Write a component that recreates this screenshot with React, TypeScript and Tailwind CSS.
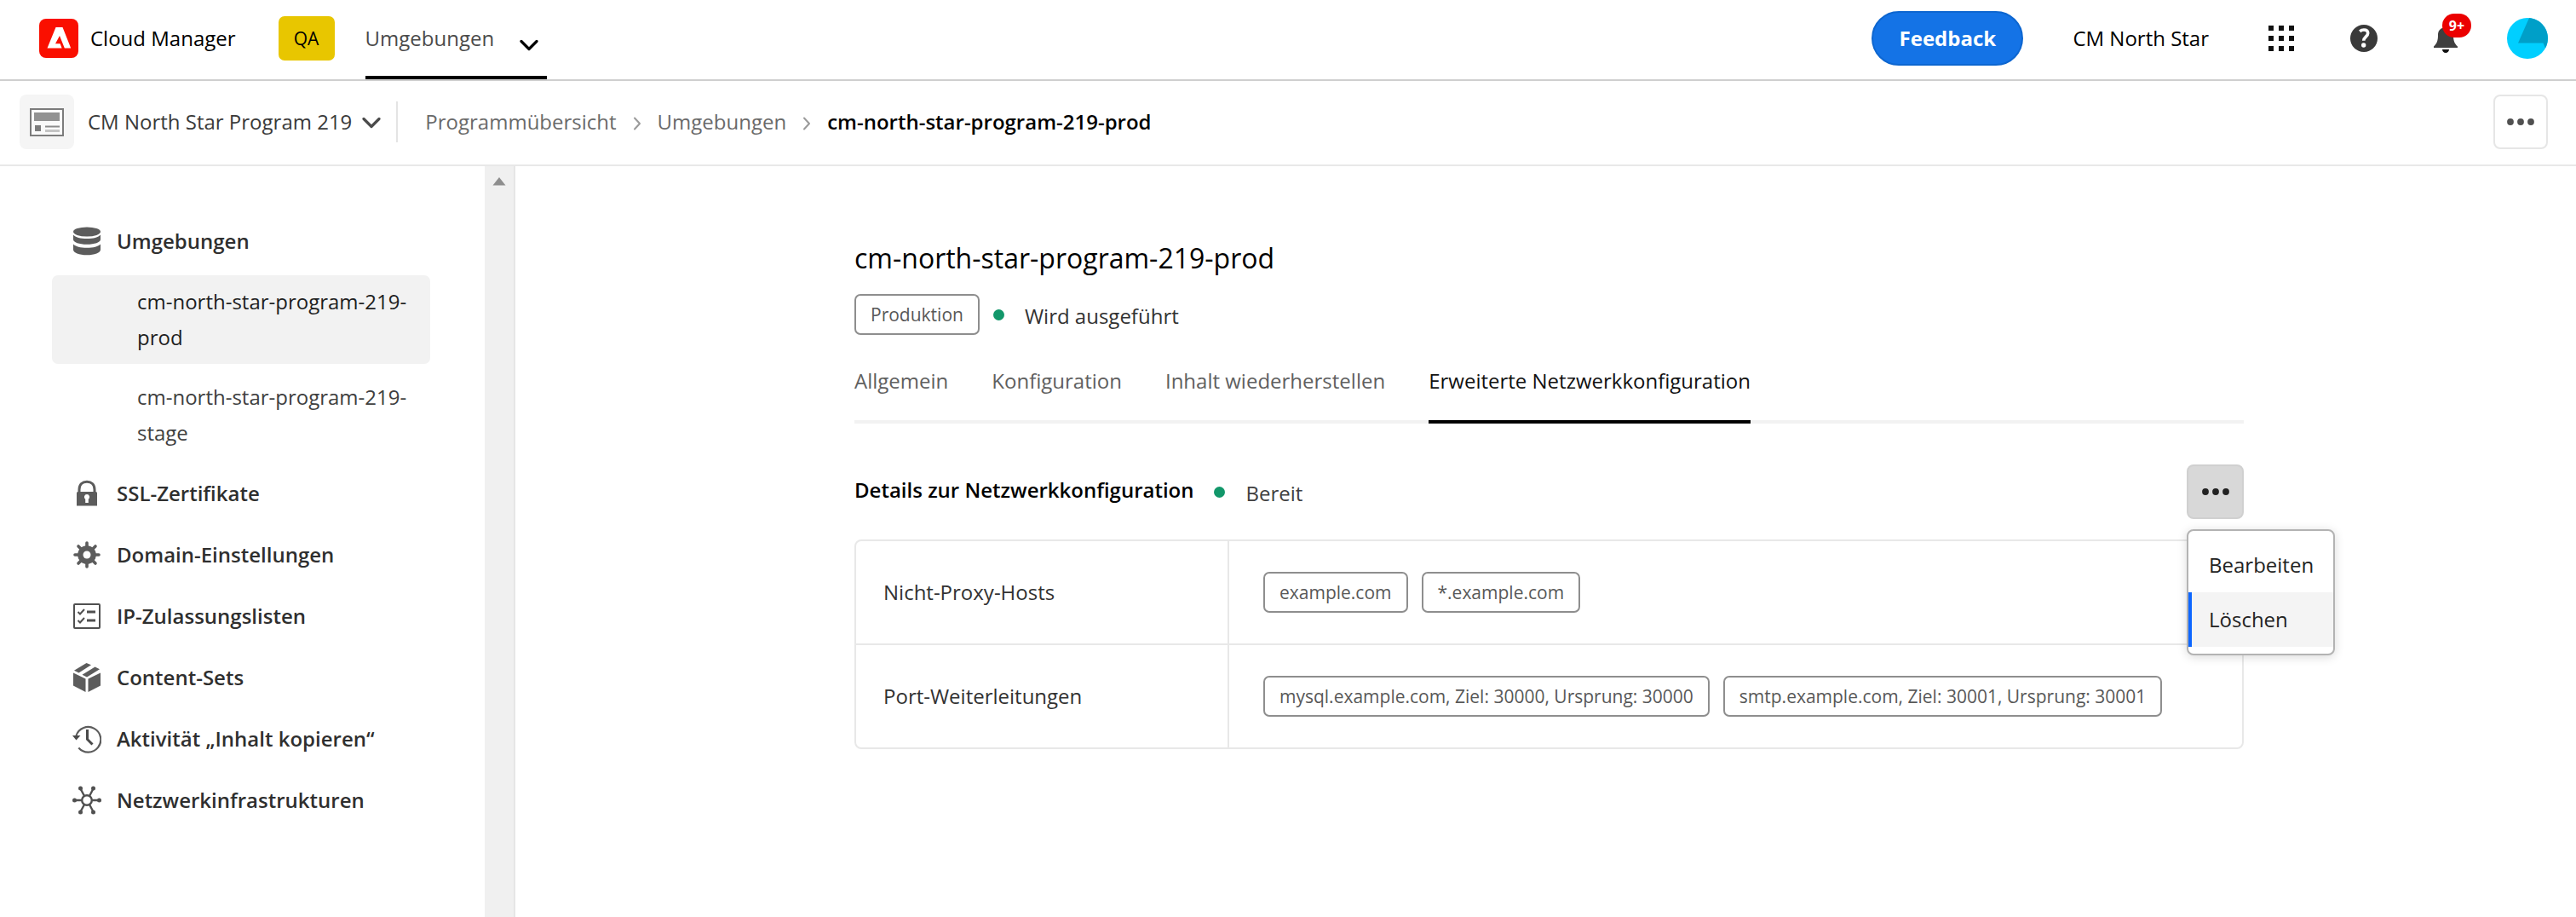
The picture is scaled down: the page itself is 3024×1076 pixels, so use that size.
import type { ReactNode } from 'react';

function ChevronDown({ className }: { className: string }) {
  return (
    <svg className={className} width="22" height="14" viewBox="0 0 22 14" fill="none" stroke="currentColor" strokeWidth="3.2" strokeLinecap="round" strokeLinejoin="round" aria-hidden="true">
      <path d="M2 2.500l9 9 9-9" />
    </svg>
  );
}

function CrumbChevron() {
  return (
    <svg className="mt-1 shrink-0 text-[#9a9a9a]" width="10" height="16" viewBox="0 0 10 16" fill="none" stroke="currentColor" strokeWidth="2" strokeLinecap="round" strokeLinejoin="round" aria-hidden="true">
      <path d="M2 1.500l6 6.500-6 6.500" />
    </svg>
  );
}

function MoreDots() {
  return (
    <svg width="34" height="10" viewBox="0 0 34 10" fill="currentColor" aria-hidden="true">
      <circle cx="5" cy="5" r="3.900" />
      <circle cx="17" cy="5" r="3.900" />
      <circle cx="29" cy="5" r="3.900" />
    </svg>
  );
}

function AdobeLogo() {
  return (
    <svg width="46" height="46" viewBox="0 0 46 46" aria-hidden="true">
      <rect width="46" height="46" rx="8" fill="#fa0f00" />
      <path d="M19.500 10h8l9.700 24.500h-7.400l-5.800-14.500-5 9.300h5.600l2 5.200H9.500z" fill="#fff" />
    </svg>
  );
}

function ProgramIcon() {
  return (
    <svg width="40" height="33" viewBox="0 0 40 33" aria-hidden="true">
      <rect x="1" y="1" width="38" height="31" fill="#fafafa" stroke="#7c7c7c" strokeWidth="2" />
      <rect x="5" y="5" width="30" height="10" fill="#929292" />
      <rect x="6" y="20" width="7" height="7" fill="#7c7c7c" />
      <path d="M18 21.500h17" stroke="#8c8c8c" strokeWidth="2" />
      <path d="M18 26.500h17" stroke="#c4c4c4" strokeWidth="3" />
    </svg>
  );
}

function AppGrid() {
  return (
    <svg width="30" height="30" viewBox="0 0 30 30" fill="#111" aria-hidden="true">
      {[0, 12, 24].map((y) => [0, 12, 24].map((x) => <rect key={`${x}-${y}`} x={x} y={y} width="6" height="6" />))}
    </svg>
  );
}

function HelpIcon() {
  return (
    <svg width="32" height="32" viewBox="0 0 32 32" aria-hidden="true">
      <circle cx="16" cy="16" r="16" fill="#3a3a3a" />
      <path d="M11.200 7.800c1.500-1.300 3-1.800 4.800-1.800 3 0 4.700 1.600 4.700 3.900 0 3.900-5 4.500-5 8.800" fill="none" stroke="#fff" strokeWidth="3.600" />
      <circle cx="15.700" cy="24" r="2.700" fill="#fff" />
    </svg>
  );
}

function BellIcon() {
  return (
    <svg width="28" height="32" viewBox="0 0 28 32" fill="#3f3f3f" aria-hidden="true">
      <path d="M14 0c1.500 0 2.500 1 2.500 2.500 4.200 1 6.500 4 6.500 8.500 0 7 1.200 9.800 5 13.500V26H0v-1.500C3.800 20.800 5 18 5 11c0-4.500 2.300-7.500 6.500-8.500C11.500 1 12.500 0 14 0z" />
      <path d="M10 28h8c0 2.300-1.700 4-4 4s-4-1.700-4-4z" fill="#111" />
    </svg>
  );
}

function Avatar() {
  return (
    <svg width="48" height="48" viewBox="0 0 48 48" aria-hidden="true">
      <circle cx="24" cy="24" r="24" fill="#00cfff" />
      <path d="M26 0A24 24 0 0 1 45 35.400L42.500 29.500H13z" fill="#009fc8" />
    </svg>
  );
}

function DatabaseIcon() {
  return (
    <svg width="32" height="34" viewBox="0 0 32 34" fill="#5c5c5c" aria-hidden="true">
      <ellipse cx="16" cy="6" rx="16" ry="5.500" />
      <path d="M0 9.500c2.500 3.200 8.500 4.500 16 4.500s13.500-1.300 16-4.500V15c0 3.300-7 5.800-16 5.800S0 18.300 0 15z" />
      <path d="M0 20.500C2.500 23.300 8.500 24.800 16 24.800s13.500-1.500 16-4.300V27c0 3.500-7 6.300-16 6.300S0 30.500 0 27z" />
    </svg>
  );
}

function LockIcon() {
  return (
    <svg width="32" height="32" viewBox="0 0 32 32" aria-hidden="true">
      <path d="M7 15v-3.500C7 5.500 10.800 2.200 16 2.200s9 3.300 9 9.300V15" fill="none" stroke="#5c5c5c" strokeWidth="3" />
      <path fillRule="evenodd" d="M5.500 14h21a1.500 1.500 0 0 1 1.500 1.500v15H4v-15A1.500 1.500 0 0 1 5.500 14zM16 17a3.200 3.200 0 0 0-1.800 5.800V27h3.600v-4.200A3.200 3.200 0 0 0 16 17z" fill="#5c5c5c" />
    </svg>
  );
}

function GearIcon() {
  return (
    <svg width="32" height="32" viewBox="0 0 32 32" aria-hidden="true">
      <g stroke="#5c5c5c" strokeWidth="3.600" strokeLinecap="round">
        <path d="M16 2v28M2 16h28M6 6l20 20M26 6L6 26" />
      </g>
      <circle cx="16" cy="16" r="10.800" fill="#5c5c5c" />
      <circle cx="16" cy="16" r="4.500" fill="#fff" />
    </svg>
  );
}

function ChecklistIcon() {
  return (
    <svg width="32" height="32" viewBox="0 0 32 32" fill="none" stroke="#505050" aria-hidden="true">
      <rect x="1" y="2" width="30" height="28" rx="1" strokeWidth="2" />
      <path d="M5.500 11l2.500 2.500L13 8M5.500 21l2.500 2.500L13 18" strokeWidth="2" />
      <path d="M16 11h10M16 21h10" strokeWidth="3" />
    </svg>
  );
}

function BoxIcon() {
  return (
    <svg width="32" height="34" viewBox="0 0 32 34" fill="#5c5c5c" aria-hidden="true">
      <path d="M15.500 0l5.500 2.200L6.500 11.500 1 8.800z" />
      <path d="M25.500 4.500L31 7.300 16 16.500l-5.500-2.800z" />
      <path d="M0 11.500l14.500 7V34L0 26.500z" />
      <path d="M32 11.500l-14.500 7V34L32 26.500z" />
    </svg>
  );
}

function HistoryIcon() {
  return (
    <svg width="34" height="34" viewBox="0 0 34 34" fill="none" aria-hidden="true">
      <path d="M4.500 13A14.800 14.800 0 1 1 7.300 27.500" stroke="#5c5c5c" strokeWidth="2.200" />
      <path d="M0 13h9.500L4.500 18.500z" fill="#4a4a4a" />
      <path d="M17.500 6v11.500l6 6" stroke="#4a4a4a" strokeWidth="3" />
    </svg>
  );
}

function NetworkIcon() {
  return (
    <svg width="34" height="34" viewBox="0 0 34 34" fill="none" stroke="#505050" strokeWidth="2.400" aria-hidden="true">
      <circle cx="17" cy="17" r="5.800" />
      <path d="M3 17h8M23 17h8M14 12L9.500 3.500M20 12l4.500-8.500M14 22l-4.500 8.500M20 22l4.500 8.500" />
      <g fill="#505050" stroke="none">
        <circle cx="2.500" cy="17" r="2.500" />
        <circle cx="31.500" cy="17" r="2.500" />
        <circle cx="9.500" cy="3" r="2.500" />
        <circle cx="24.500" cy="3" r="2.500" />
        <circle cx="9.500" cy="31" r="2.500" />
        <circle cx="24.500" cy="31" r="2.500" />
      </g>
    </svg>
  );
}

function NavItem({ icon, label }: { icon: ReactNode; label: string }) {
  return (
    <a href="#" className="flex h-16 items-center gap-[18px] pl-6 font-semibold text-[#2f2f2f]">
      <span className="flex w-[34px] items-center justify-center">{icon}</span>
      {label}
    </a>
  );
}

function Chip({ children }: { children: ReactNode }) {
  return (
    <span className="flex h-12 items-center whitespace-nowrap rounded-[7px] border-2 border-[#8e8e8e] px-[17px] text-[21px] text-[#585858]">
      {children}
    </span>
  );
}

function StatusDot() {
  return <span className="size-[13px] shrink-0 rounded-full bg-[#12976a]" />;
}

const tabs = ['Allgemein', 'Konfiguration', 'Inhalt wiederherstellen', 'Erweiterte Netzwerkkonfiguration'];

const rows = [
  { label: 'Nicht-Proxy-Hosts', values: ['example.com', '*.example.com'] },
  {
    label: 'Port-Weiterleitungen',
    values: ['mysql.example.com, Ziel: 30000, Ursprung: 30000', 'smtp.example.com, Ziel: 30001, Ursprung: 30001'],
  },
];

function TopBar() {
  return (
    <header className="flex h-[95px] items-stretch justify-between border-b-2 border-[#cfcfcf] pr-[33px] pb-[3px] pl-[46px]">
      <div className="flex items-center">
        <AdobeLogo />
        <span className="ml-[14px] text-black">Cloud Manager</span>
        <span className="ml-[50px] flex h-[52px] w-[66px] items-center justify-center rounded-[7px] bg-[#e8c600] text-[21px] font-medium text-black">QA</span>
        <button type="button" className="ml-9 flex h-[93px] w-[213px] items-center justify-between self-start border-b-4 border-black pr-[10px] text-[#4b4b4b]">
          Umgebungen
          <ChevronDown className="mt-4 text-black" />
        </button>
      </div>
      <div className="flex items-center">
        <button type="button" className="h-16 w-[178px] rounded-full border-2 border-[#0d66d0] bg-[#1473e6] font-bold text-white">Feedback</button>
        <span className="ml-[58px] text-black">CM North Star</span>
        <button type="button" aria-label="Apps" className="ml-[70px]"><AppGrid /></button>
        <button type="button" aria-label="Hilfe" className="ml-[66px]"><HelpIcon /></button>
        <button type="button" aria-label="Benachrichtigungen" className="relative ml-[66px] pt-0.5">
          <BellIcon />
          <span className="absolute -top-3 left-[10px] flex h-7 w-[34px] items-center justify-center rounded-full bg-[#eb0000] text-base font-bold text-white">9+</span>
        </button>
        <button type="button" aria-label="Profil" className="ml-[58px]"><Avatar /></button>
      </div>
    </header>
  );
}

function BreadcrumbBar() {
  return (
    <div className="flex h-[100px] items-center justify-between border-b-2 border-[#e8e8e8] pr-[33px] pb-0.5 pl-[23px]">
      <div className="flex items-center">
        <span className="flex size-16 items-center justify-center rounded-lg bg-[#f5f5f5]"><ProgramIcon /></span>
        <button type="button" className="ml-4 flex items-center gap-3 text-[#3a3a3a]">
          CM North Star Program 219
          <ChevronDown className="mt-0.5 text-[#4b4b4b]" />
        </button>
        <span className="ml-[18px] h-12 w-0.5 bg-[#e4e4e4]" />
        <nav aria-label="Breadcrumb" className="ml-8 flex items-center gap-[19px] text-[#6a6a6a]">
          <a href="#">Programmübersicht</a>
          <CrumbChevron />
          <a href="#">Umgebungen</a>
          <CrumbChevron />
          <span className="font-semibold text-black">cm-north-star-program-219-prod</span>
        </nav>
      </div>
      <button type="button" aria-label="Weitere Aktionen" className="flex size-16 items-center justify-center rounded-lg border-2 border-[#e6e6e6] text-[#505050]">
        <MoreDots />
      </button>
    </div>
  );
}

function Sidebar() {
  return (
    <aside className="flex w-[605px] shrink-0 border-r-2 border-[#e6e6e6]">
      <nav aria-label="Umgebungen" className="flex flex-1 flex-col gap-2 pt-14 pr-16 pl-[61px]">
        <NavItem icon={<DatabaseIcon />} label="Umgebungen" />
        <a href="#" className="rounded-[7px] bg-[#f2f2f2] py-[10px] pr-4 pl-[100px] leading-[42px] text-[#1f1f1f]">cm-north-star-program-219-prod</a>
        <a href="#" className="rounded-[7px] py-[10px] pr-4 pl-[100px] leading-[42px] text-[#404040]">cm-north-star-program-219-stage</a>
        <NavItem icon={<LockIcon />} label="SSL-Zertifikate" />
        <NavItem icon={<GearIcon />} label="Domain-Einstellungen" />
        <NavItem icon={<ChecklistIcon />} label="IP-Zulassungslisten" />
        <NavItem icon={<BoxIcon />} label="Content-Sets" />
        <NavItem icon={<HistoryIcon />} label="Aktivität „Inhalt kopieren“" />
        <NavItem icon={<NetworkIcon />} label="Netzwerkinfrastrukturen" />
      </nav>
      <div className="flex w-[34px] justify-center bg-[#f0f0f0] pt-[13px]">
        <svg width="16" height="10" viewBox="0 0 16 10" fill="#8e8e8e" aria-hidden="true">
          <path d="M8 0l7.500 9.500H.5z" />
        </svg>
      </div>
    </aside>
  );
}

function ActionMenu() {
  return (
    <div className="relative">
      <button type="button" aria-label="Aktionen" aria-expanded="true" className="flex h-16 w-[67px] items-center justify-center rounded-lg border-2 border-[#d0d0d0] bg-[#d8d8d8] text-[#222]">
        <MoreDots />
      </button>
      <div role="menu" className="absolute top-[76px] left-0 w-[174px] rounded-lg border-2 border-[#b3b3b3] bg-white py-2 text-[#222] shadow-[0_2px_12px_rgba(0,0,0,0.15)]">
        <button type="button" role="menuitem" className="flex h-16 w-full items-center border-l-4 border-transparent pl-5">Bearbeiten</button>
        <button type="button" role="menuitem" className="flex h-16 w-full items-center border-l-4 border-[#0d66ff] bg-[#f4f4f4] pl-5">Löschen</button>
      </div>
    </div>
  );
}

export default function App() {
  return (
    <div className="flex min-h-screen flex-col bg-white font-['Open_Sans',sans-serif] text-[24px] leading-8 text-[#323232]">
      <TopBar />
      <BreadcrumbBar />
      <div className="flex flex-1">
        <Sidebar />
        <main className="flex-1 pt-[82px] pl-2">
          <div className="mx-auto max-w-[1631px]">
            <h1 className="text-[32px] leading-[52px] font-medium text-black">cm-north-star-program-219-prod</h1>
            <div className="mt-4 flex items-center">
              <Chip>Produktion</Chip>
              <span className="ml-4"><StatusDotBox /></span>
              <span className="mt-1 ml-6">Wird ausgeführt</span>
            </div>
            <div role="tablist" className="mt-8 flex gap-[51px] border-b-4 border-[#f2f2f2]">
              {tabs.map((tab, i) => (
                <button
                  key={tab}
                  type="button"
                  role="tab"
                  aria-selected={i === 3}
                  className={i === 3 ? '-mb-1 border-b-4 border-black pt-1.5 pb-[30px] text-[#111]' : 'pt-1.5 pb-[30px] text-[#606060]'}
                >
                  {tab}
                </button>
              ))}
            </div>
            <div className="mt-12 flex items-center justify-between">
              <div className="flex items-center">
                <h2 className="pb-1 font-semibold text-black">Details zur Netzwerkkonfiguration</h2>
                <span className="ml-6"><StatusDotBox /></span>
                <span className="mt-1 ml-6 text-[#404040]">Bereit</span>
              </div>
              <ActionMenu />
            </div>
            <div className="mt-6 overflow-hidden rounded-lg border-2 border-[#e8e8e8]">
              <table className="w-full border-collapse">
                <tbody>
                  {rows.map((row, i) => (
                    <tr key={row.label} className={i > 0 ? 'border-t-2 border-[#e8e8e8]' : ''}>
                      <th scope="row" className="w-[437px] border-r-2 border-[#e8e8e8] pl-8 text-left font-normal">{row.label}</th>
                      <td className="py-9 pl-10">
                        <div className="flex gap-4">
                          {row.values.map((v) => <Chip key={v}>{v}</Chip>)}
                        </div>
                      </td>
                    </tr>
                  ))}
                </tbody>
              </table>
            </div>
          </div>
        </main>
      </div>
    </div>
  );
}

function StatusDotBox() {
  return (
    <span className="flex items-center">
      <StatusDot />
    </span>
  );
}
